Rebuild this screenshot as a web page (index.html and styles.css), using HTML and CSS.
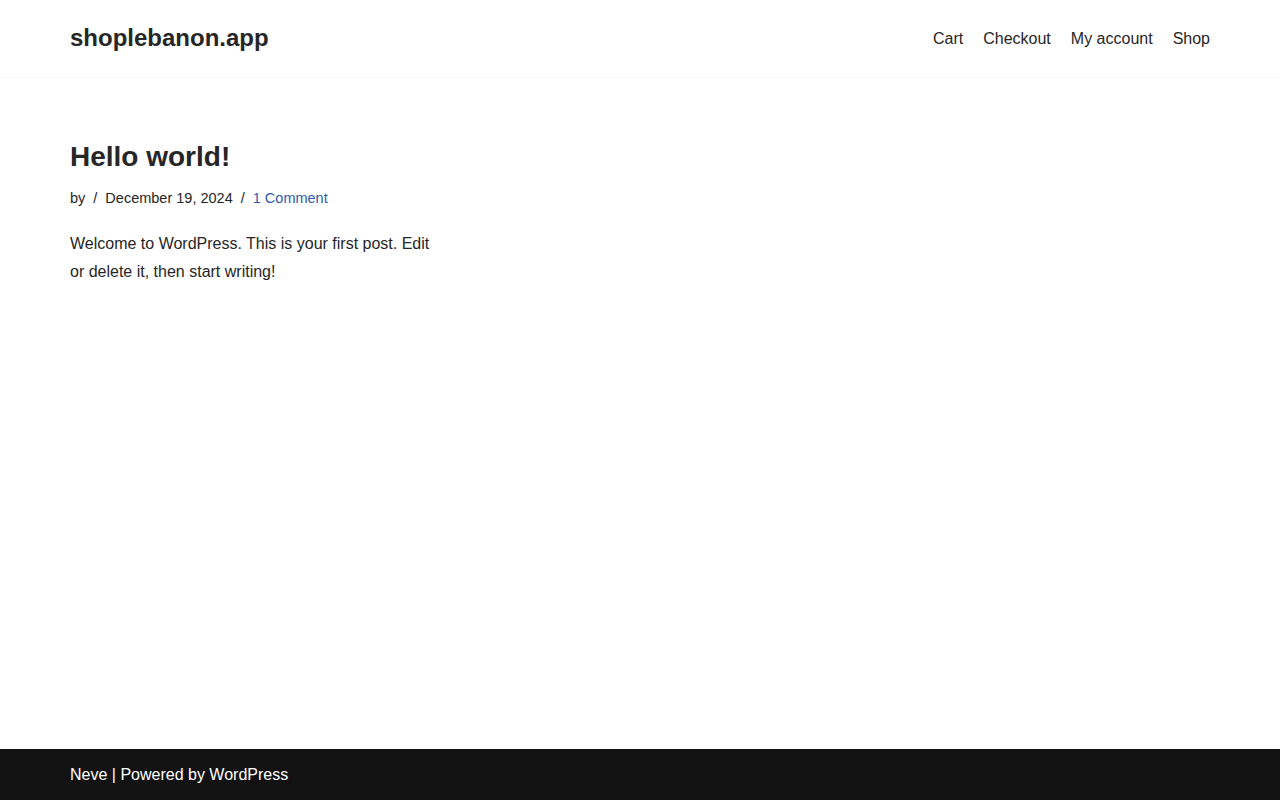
FILE: index.html
```html
<!DOCTYPE html>
<html lang="en">
<head>
<meta charset="utf-8">
<title>shoplebanon.app</title>
<link rel="stylesheet" href="styles.css">
</head>
<body>
<div class="page">
  <header class="site-header">
    <div class="container header-row">
      <a class="site-title" href="#">shoplebanon.app</a>
      <nav class="nav">
        <a href="#">Cart</a>
        <a href="#">Checkout</a>
        <a href="#">My account</a>
        <a href="#">Shop</a>
      </nav>
    </div>
  </header>
  <main class="main">
    <div class="container">
      <article class="post">
        <h2 class="post-title">Hello world!</h2>
        <div class="meta">
          <span>by</span><span class="sep">/</span><span>December 19, 2024</span><span class="sep">/</span><a href="#" class="comments">1 Comment</a>
        </div>
        <p class="excerpt">Welcome to WordPress. This is your first post. Edit or delete it, then start writing!</p>
      </article>
    </div>
  </main>
  <footer class="site-footer">
    <div class="container">
      <span>Neve | Powered by WordPress</span>
    </div>
  </footer>
</div>
</body>
</html>
```
FILE: styles.css
```css
* { box-sizing: border-box; }
html, body { margin: 0; padding: 0; }
body {
  font-family: "Liberation Sans", Arial, sans-serif;
  color: #272626;
  background: #fff;
}
a { color: inherit; text-decoration: none; }
.page {
  min-height: 800px;
  display: flex;
  flex-direction: column;
}
.container {
  width: 1140px;
  margin: 0 auto;
}
.site-header {
  height: 78px;
  border-bottom: 1px solid #f5f5f5;
}
.header-row {
  height: 77px;
  display: flex;
  align-items: center;
  justify-content: space-between;
}
.site-title {
  font-size: 24px;
  font-weight: 700;
  line-height: 1;
  margin-top: -2px;
}
.nav {
  display: flex;
  gap: 20px;
  font-size: 16px;
  line-height: 1;
}
.main {
  flex: 1;
  padding-top: 62px;
}
.post {
  width: 370px;
}
.post-title {
  font-size: 28px;
  font-weight: 700;
  line-height: 34px;
  margin: 0 0 14px;
}
.meta {
  font-size: 14.5px;
  line-height: 20px;
  display: flex;
  margin-bottom: 22px;
}
.sep { margin: 0 8px; }
.comments { color: #2f5aae; }
.excerpt {
  font-size: 16px;
  line-height: 28px;
  margin: 0;
}
.site-footer {
  height: 51px;
  background: #121212;
  color: #fff;
  font-size: 16px;
  display: flex;
  align-items: center;
}
```
